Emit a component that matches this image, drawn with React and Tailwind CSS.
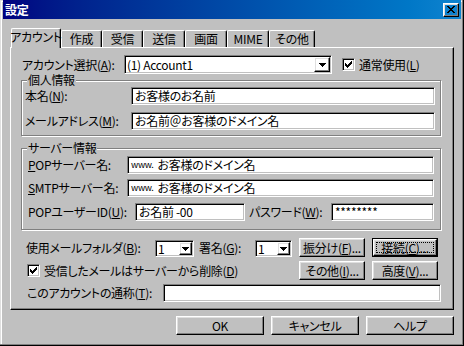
import React from 'react'

const raised =
  'border border-t-white border-l-white border-r-black border-b-black shadow-[inset_-1px_-1px_0_#808080,inset_1px_1px_0_#dfdfdf]'
const sunken =
  'border border-t-[#808080] border-l-[#808080] border-r-white border-b-white shadow-[inset_1px_1px_0_#000,inset_-1px_-1px_0_#c0c0c0] bg-white'

function K({ children }) {
  return <u className="underline-offset-[1px]">{children}</u>
}

function DownArrow() {
  return (
    <svg width="7" height="4" viewBox="0 0 7 4" shapeRendering="crispEdges">
      <path d="M0 0h7v1h-1v1h-1v1h-1v1h-1v-1h-1v-1h-1v-1h-1z" fill="#000" />
    </svg>
  )
}

function Check() {
  return (
    <svg width="7" height="7" viewBox="0 0 7 7" shapeRendering="crispEdges">
      <path
        d="M0 2h1v1h1v1h1v-1h1v-1h1v-1h1v-1h1v3h-1v1h-1v1h-1v1h-1v1h-1v-1h-1v-1h-1v-1h-1z"
        fill="#000"
      />
    </svg>
  )
}

function CheckBox() {
  return (
    <div className={`${sunken} w-[13px] h-[13px] shrink-0 flex items-center justify-center`}>
      <Check />
    </div>
  )
}

function Edit({ className, children }) {
  return (
    <div className={`${sunken} h-[18px] shrink-0 flex items-center pl-[3px] overflow-hidden ${className}`}>
      {children}
    </div>
  )
}

function Combo({ className, children, arrow }) {
  return (
    <div className={`${sunken} shrink-0 flex items-center pl-[2px] ${className}`}>
      <span className="flex-1">{children}</span>
      <div className={`${raised} mr-[1px] flex items-center justify-center ${arrow}`}>
        <DownArrow />
      </div>
    </div>
  )
}

function Button({ className, children }) {
  return (
    <div className={`${raised} shrink-0 flex items-center justify-center ${className}`}>
      {children}
    </div>
  )
}

function Tab({ className, children }) {
  return (
    <div
      className={`h-[17px] shrink-0 flex items-center justify-center border-l border-t border-r border-white border-r-black rounded-t-[2px] shadow-[inset_-1px_0_0_#808080] ${className}`}
    >
      {children}
    </div>
  )
}

export default function App() {
  return (
    <div className="w-[464px] h-[346px] overflow-hidden whitespace-nowrap bg-[#c0c0c0] px-[3px] text-[12px] leading-[14px] tracking-[-0.3px] text-black font-[family-name:'Noto_Sans_CJK_JP','Noto_Sans',sans-serif] [font-feature-settings:'palt'] shadow-[inset_-1px_-1px_0_#000,inset_-2px_-2px_0_#808080,inset_1px_1px_0_#dfdfdf,inset_2px_2px_0_#fff]">
      {/* title bar */}
      <div className="h-[19px] flex items-center px-[2px] bg-linear-to-r from-[#000080] to-[#1084d0]">
        <span className="text-white font-bold">設定</span>
        <div className={`${raised} ml-auto w-[16px] h-[14px] flex items-center justify-center`}>
          <svg width="8" height="7" viewBox="0 0 8 7" shapeRendering="crispEdges" fill="#000">
            <rect x="0" y="0" width="2" height="1" />
            <rect x="6" y="0" width="2" height="1" />
            <rect x="1" y="1" width="2" height="1" />
            <rect x="5" y="1" width="2" height="1" />
            <rect x="2" y="2" width="4" height="1" />
            <rect x="3" y="3" width="2" height="1" />
            <rect x="2" y="4" width="4" height="1" />
            <rect x="1" y="5" width="2" height="1" />
            <rect x="5" y="5" width="2" height="1" />
            <rect x="0" y="6" width="2" height="1" />
            <rect x="6" y="6" width="2" height="1" />
          </svg>
        </div>
      </div>

      {/* tabs */}
      <div className="flex items-end h-[19px] mt-[9px] pl-[8px]">
        <div className="relative z-10 -mb-[1px] h-[20px] w-[50px] shrink-0 flex items-center justify-center pb-[3px] bg-[#c0c0c0] border-l border-t border-r border-white border-r-black rounded-t-[2px] shadow-[inset_-1px_0_0_#808080]">
          アカウント
        </div>
        <Tab className="w-[41px]">作成</Tab>
        <Tab className="w-[41px]">受信</Tab>
        <Tab className="w-[42px]">送信</Tab>
        <Tab className="w-[42px]">画面</Tab>
        <Tab className="w-[42px]">MIME</Tab>
        <Tab className="w-[46px]">その他</Tab>
      </div>

      {/* panel */}
      <div className="ml-[7px] w-[444px] h-[263px] flex flex-col border border-t-white border-l-white border-r-black border-b-black shadow-[inset_-1px_-1px_0_#808080]">
        <div className="flex items-center h-[19px] mt-[7px]">
          <span className="ml-[11px] w-[102px] shrink-0">
            アカウント選択(<K>A</K>):
          </span>
          <Combo className="w-[208px] h-[19px]" arrow="w-[16px] h-[15px]">
            (1) Account1
          </Combo>
          <div className="ml-[10px]">
            <CheckBox />
          </div>
          <span className="ml-[4px]">
            通常使用(<K>L</K>)
          </span>
        </div>

        {/* 個人情報 */}
        <div className="ml-[10px] mt-[6px] w-[420px] border border-[#808080] shadow-[1px_1px_0_#fff,inset_1px_1px_0_#fff] pb-[5px]">
          <div className="-mt-[8px] ml-[5px] px-[1px] w-fit h-[14px] bg-[#c0c0c0]">個人情報</div>
          <div className="flex items-center h-[18px]">
            <span className="ml-[3px] w-[106px] shrink-0">
              本名(<K>N</K>):
            </span>
            <Edit className="w-[304px]">お客様のお名前</Edit>
          </div>
          <div className="flex items-center h-[18px] mt-[7px]">
            <span className="ml-[3px] w-[106px] shrink-0">
              メールアドレス(<K>M</K>):
            </span>
            <Edit className="w-[304px]">お名前＠お客様のドメイン名</Edit>
          </div>
        </div>

        {/* サーバー情報 */}
        <div className="ml-[10px] mt-[12px] w-[420px] border border-[#808080] shadow-[1px_1px_0_#fff,inset_1px_1px_0_#fff] pb-[8px]">
          <div className="-mt-[8px] ml-[5px] px-[1px] w-fit h-[14px] bg-[#c0c0c0]">サーバー情報</div>
          <div className="flex items-center h-[18px] mt-[1px]">
            <span className="ml-[6px] w-[99px] shrink-0">
              <K>P</K>OPサーバー名:
            </span>
            <Edit className="w-[307px]">
              <span className="text-[9px] mr-[4px]">www.</span>お客様のドメイン名
            </Edit>
          </div>
          <div className="flex items-center h-[18px] mt-[5px]">
            <span className="ml-[6px] w-[99px] shrink-0">
              <K>S</K>MTPサーバー名:
            </span>
            <Edit className="w-[307px]">
              <span className="text-[9px] mr-[4px]">www.</span>お客様のドメイン名
            </Edit>
          </div>
          <div className="flex items-center h-[18px] mt-[6px]">
            <span className="ml-[6px] w-[107px] shrink-0">
              POPユーザーID(<K>U</K>):
            </span>
            <Edit className="w-[110px]">お名前 -00</Edit>
            <span className="ml-[4px] w-[82px] shrink-0">
              パスワード(<K>W</K>):
            </span>
            <Edit className="w-[103px] pl-[2px]">********</Edit>
          </div>
        </div>

        {/* folder / signature */}
        <div className="flex items-end h-[19px] mt-[8px]">
          <span className="ml-[15px] w-[129px] shrink-0 self-center">
            使用メールフォルダ(<K>B</K>):
          </span>
          <Combo className="w-[39px] h-[17px]" arrow="w-[13px] h-[13px]">
            1
          </Combo>
          <span className="ml-[5px] w-[56px] shrink-0 self-center">
            署名(<K>G</K>):
          </span>
          <Combo className="w-[37px] h-[17px]" arrow="w-[13px] h-[13px]">
            1
          </Combo>
          <Button className="ml-[7px] w-[66px] h-[19px]">
            振分け(<K>F</K>)...
          </Button>
          <div className="ml-[7px] w-[66px] h-[19px] border border-black shrink-0">
            <div className={`${raised} h-full flex items-center justify-center p-[2px]`}>
              <div className="w-full h-full flex items-center justify-center border border-dotted border-black">
                接続(<K>C</K>)...
              </div>
            </div>
          </div>
        </div>

        <div className="flex items-center h-[19px] mt-[4px]">
          <div className="ml-[16px]">
            <CheckBox />
          </div>
          <span className="ml-[4px]">
            受信したメールはサーバーから削除(<K>D</K>)
          </span>
          <div className="ml-auto mr-[15px] flex gap-[7px]">
            <Button className="w-[66px] h-[19px]">
              その他(<K>I</K>)...
            </Button>
            <Button className="w-[66px] h-[19px]">
              高度(<K>V</K>)...
            </Button>
          </div>
        </div>

        <div className="flex items-center h-[18px] mt-[4px]">
          <span className="ml-[16px] w-[136px] shrink-0">
            このアカウントの通称(<K>T</K>):
          </span>
          <Edit className="w-[278px]" />
        </div>
      </div>

      {/* dialog buttons */}
      <div className="flex gap-[7px] mt-[6px] ml-[173px]">
        <Button className="w-[88px] h-[19px]">OK</Button>
        <Button className="w-[88px] h-[19px]">キャンセル</Button>
        <Button className="w-[88px] h-[19px]">ヘルプ</Button>
      </div>
    </div>
  )
}
